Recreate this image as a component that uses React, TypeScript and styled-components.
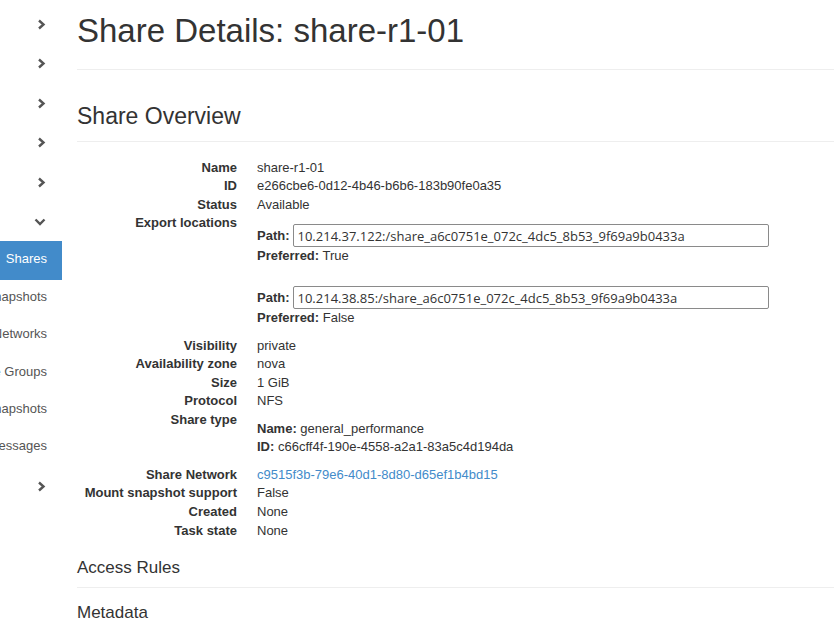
import React from 'react';
import styled, { createGlobalStyle } from 'styled-components';

const GlobalStyle = createGlobalStyle`
	html, body {
		margin: 0;
		padding: 0;
		background: #fff;
	}
	body {
		font-family: "Liberation Sans", Helvetica, Arial, sans-serif;
		font-size: 13px;
		line-height: 1.42857;
		color: #333;
		overflow: hidden;
	}
	* {
		box-sizing: border-box;
	}
`;

const Page = styled.div`
	display: flex;
	width: 834px;
	height: 632px;
	overflow: hidden;
`;

const Sidebar = styled.nav`
	flex: none;
	width: 62px;
	padding-top: 4.25px;
	display: flex;
	flex-direction: column;
	overflow: hidden;
`;

const Category = styled.div`
	height: 39.5px;
	display: flex;
	align-items: center;
	justify-content: flex-end;
	padding-right: 16px;
	color: #555;
`;

const NavItem = styled.div<{ $active?: boolean }>`
	height: ${(p) => (p.$active ? '39px' : '37.25px')};
	display: flex;
	align-items: center;
	justify-content: flex-end;
	padding: 0 15px 3px 0;
	white-space: nowrap;
	background: ${(p) => (p.$active ? '#428bca' : 'transparent')};
	color: ${(p) => (p.$active ? '#fff' : '#555')};

	span {
		flex: none;
	}
`;

const Main = styled.main`
	flex: 1;
	min-width: 0;
	padding-left: 15px;
`;

const PageHeader = styled.div`
	padding: 13px 0 20px;
	border-bottom: 1px solid #eee;
`;

const Title = styled.h1`
	margin: 0;
	font-size: 33px;
	line-height: 36px;
	font-weight: 400;
	color: #333;
`;

const SectionTitle = styled.h2`
	margin: 33px 0 0;
	padding-bottom: 12px;
	font-size: 23px;
	line-height: 26px;
	font-weight: 400;
	border-bottom: 1px solid #eee;
`;

const DetailList = styled.dl`
	margin: 16.7px 0 0;
	display: grid;
	grid-template-columns: 160px 1fr;
	column-gap: 20px;
	align-items: start;
`;

const Term = styled.dt`
	font-weight: 700;
	text-align: right;
	white-space: nowrap;
`;

const Value = styled.dd<{ $padTop?: number; $padBottom?: number }>`
	margin: 0;
	padding-top: ${(p) => p.$padTop ?? 0}px;
	padding-bottom: ${(p) => p.$padBottom ?? 0}px;
`;

const Location = styled.div`
	& + & {
		margin-top: 20.5px;
	}
`;

const PathRow = styled.div`
	display: flex;
	align-items: center;
	gap: 3px;
	height: 23px;
`;

const PathInput = styled.input`
	width: 476px;
	height: 23px;
	padding: 0 4px;
	border: 1px solid #8a8a8a;
	border-radius: 2px;
	font-family: "Open Sans", "Noto Sans", sans-serif;
	font-size: 13px;
	color: #333;
	background: #fff;
`;

const Bold = styled.b`
	font-weight: 700;
`;

const Link = styled.a`
	color: #428bca;
	text-decoration: none;
`;

const SubTitle = styled.h3<{ $top: number }>`
	margin: ${(p) => p.$top}px 0 0;
	font-size: 17px;
	line-height: 19px;
	font-weight: 400;
	color: #333;
`;

const Divider = styled.div`
	height: 1px;
	margin-top: 10.5px;
	background: #eee;
`;

const ChevronRight = () => (
	<svg width="9" height="11" viewBox="0 0 9 11">
		<polyline points="2,1.5 6.5,5.5 2,9.5" fill="none" stroke="#555" strokeWidth="2.4" />
	</svg>
);

const ChevronDown = () => (
	<svg width="12" height="8" viewBox="0 0 12 8">
		<polyline points="1.5,1.5 6,6 10.5,1.5" fill="none" stroke="#555" strokeWidth="2.4" />
	</svg>
);

const subItems = ['Share Snapshots', 'Share Networks', 'Share Groups', 'Share Group Snapshots', 'User Messages'];

const locations = [
	{ path: '10.214.37.122:/share_a6c0751e_072c_4dc5_8b53_9f69a9b0433a', preferred: 'True' },
	{ path: '10.214.38.85:/share_a6c0751e_072c_4dc5_8b53_9f69a9b0433a', preferred: 'False' },
];

export default function App() {
	return (
		<>
			<GlobalStyle />
			<Page>
				<Sidebar>
					{[0, 1, 2, 3, 4].map((i) => (
						<Category key={i}>
							<ChevronRight />
						</Category>
					))}
					<Category>
						<ChevronDown />
					</Category>
					<NavItem $active>
						<span>Shares</span>
					</NavItem>
					{subItems.map((s) => (
						<NavItem key={s}>
							<span>{s}</span>
						</NavItem>
					))}
					<Category>
						<ChevronRight />
					</Category>
				</Sidebar>

				<Main>
					<PageHeader>
						<Title>Share Details: share-r1-01</Title>
					</PageHeader>

					<SectionTitle>Share Overview</SectionTitle>

					<DetailList>
						<Term>Name</Term>
						<Value>share-r1-01</Value>
						<Term>ID</Term>
						<Value>e266cbe6-0d12-4b46-b6b6-183b90fe0a35</Value>
						<Term>Status</Term>
						<Value>Available</Value>
						<Term>Export locations</Term>
						<Value $padTop={10} $padBottom={8.5}>
							{locations.map((l) => (
								<Location key={l.path}>
									<PathRow>
										<Bold>Path:</Bold>
										<PathInput readOnly value={l.path} />
									</PathRow>
									<div>
										<Bold>Preferred:</Bold> {l.preferred}
									</div>
								</Location>
							))}
						</Value>
						<Term>Visibility</Term>
						<Value>private</Value>
						<Term>Availability zone</Term>
						<Value>nova</Value>
						<Term>Size</Term>
						<Value>1 GiB</Value>
						<Term>Protocol</Term>
						<Value>NFS</Value>
						<Term>Share type</Term>
						<Value $padTop={9} $padBottom={9}>
							<div>
								<Bold>Name:</Bold> general_performance
							</div>
							<div>
								<Bold>ID:</Bold> c66cff4f-190e-4558-a2a1-83a5c4d194da
							</div>
						</Value>
						<Term>Share Network</Term>
						<Value>
							<Link href="#">c9515f3b-79e6-40d1-8d80-d65ef1b4bd15</Link>
						</Value>
						<Term>Mount snapshot support</Term>
						<Value>False</Value>
						<Term>Created</Term>
						<Value>None</Value>
						<Term>Task state</Term>
						<Value>None</Value>
					</DetailList>

					<SubTitle $top={17.5}>Access Rules</SubTitle>
					<Divider />
					<SubTitle $top={14.5}>Metadata</SubTitle>
				</Main>
			</Page>
		</>
	);
}
